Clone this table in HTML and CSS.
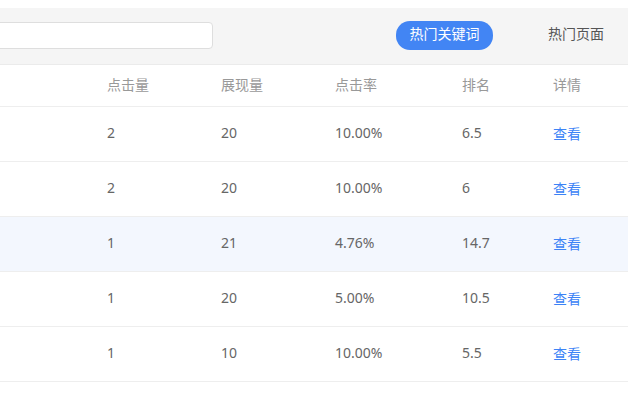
FILE: index.html
```html
<!DOCTYPE html>
<html lang="zh">
<head>
<meta charset="utf-8">
<link rel="stylesheet" href="styles.css">
</head>
<body>
<div class="page">
  <div class="toolbar">
    <div class="search"></div>
    <div class="tabs">
      <span class="tab active">热门关键词</span>
      <span class="tab">热门页面</span>
    </div>
  </div>
  <div class="table">
    <div class="row head">
      <span></span><span>点击量</span><span>展现量</span><span>点击率</span><span>排名</span><span>详情</span>
    </div>
    <div class="row">
      <span></span><span>2</span><span>20</span><span>10.00%</span><span>6.5</span><span class="link">查看</span>
    </div>
    <div class="row">
      <span></span><span>2</span><span>20</span><span>10.00%</span><span>6</span><span class="link">查看</span>
    </div>
    <div class="row hover">
      <span></span><span>1</span><span>21</span><span>4.76%</span><span>14.7</span><span class="link">查看</span>
    </div>
    <div class="row">
      <span></span><span>1</span><span>20</span><span>5.00%</span><span>10.5</span><span class="link">查看</span>
    </div>
    <div class="row">
      <span></span><span>1</span><span>10</span><span>10.00%</span><span>5.5</span><span class="link">查看</span>
    </div>
  </div>
</div>
</body>
</html>
```
FILE: styles.css
```css
html, body {
  margin: 0;
  padding: 0;
  background: #fff;
}
body {
  font-family: "Noto Sans CJK SC", "Noto Sans", sans-serif;
  font-size: 14px;
  color: #666;
  overflow: hidden;
}
.page {
  padding-top: 8px;
  width: 628px;
}
.toolbar {
  height: 57px;
  padding-bottom: 2px;
  background: #f5f5f5;
  border-bottom: 1px solid #ebebeb;
  display: flex;
  align-items: center;
  box-sizing: border-box;
}
.search {
  width: 220px;
  margin-left: -7px;
  height: 27px;
  box-sizing: border-box;
  background: #fff;
  border: 1px solid #dedede;
  border-radius: 4px;
}
.tabs {
  margin-left: 183px;
  display: flex;
  align-items: center;
}
.tab {
  height: 27px;
  line-height: 25px;
  padding: 0 14px 2px;
  border-radius: 14px;
  color: #555;
  white-space: nowrap;
}
.tab.active {
  background: #4285f4;
  color: #fff;
  width: 70px;
  padding: 0 13.5px 2px;
  text-align: center;
  margin-right: 41px;
}
.row {
  display: grid;
  grid-template-columns: 107px 114px 114px 127px 91px 1fr;
  height: 55px;
  padding-bottom: 3px;
  align-items: center;
  border-bottom: 1px solid #eee;
  box-sizing: border-box;
  font-family: "Noto Sans", "Noto Sans CJK SC", sans-serif;
  font-size: 14px;
  color: #666;
}
.row.head {
  height: 42px;
  color: #999;
  font-family: "Noto Sans CJK SC", sans-serif;
}
.row.hover {
  background: #f3f7fe;
}
.row .link {
  color: #3c83f6;
  font-family: "Noto Sans CJK SC", sans-serif;
}
```
